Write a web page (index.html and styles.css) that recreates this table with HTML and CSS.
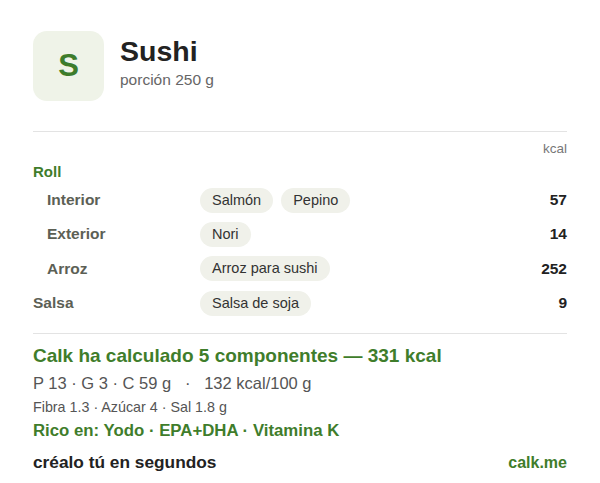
FILE: index.html
```html
<!DOCTYPE html>
<html lang="es">
<head>
    <meta charset="UTF-8">
    <title>Sushi</title>
    <link rel="stylesheet" href="styles.css">
</head>
<body>
    <div class="card">
        <div class="header">
            <div class="avatar">S</div>
            <div class="title-block">
                <h1>Sushi</h1>
                <div class="portion">porción 250 g</div>
            </div>
        </div>
        <hr>
        <div class="unit">kcal</div>
        <div class="group">Roll</div>
        <div class="row sub">
            <div class="label">Interior</div>
            <div class="chips"><span class="chip">Salmón</span><span class="chip">Pepino</span></div>
            <div class="kcal">57</div>
        </div>
        <div class="row sub">
            <div class="label">Exterior</div>
            <div class="chips"><span class="chip">Nori</span></div>
            <div class="kcal">14</div>
        </div>
        <div class="row sub">
            <div class="label">Arroz</div>
            <div class="chips"><span class="chip">Arroz para sushi</span></div>
            <div class="kcal">252</div>
        </div>
        <div class="row">
            <div class="label">Salsa</div>
            <div class="chips"><span class="chip">Salsa de soja</span></div>
            <div class="kcal">9</div>
        </div>
        <hr class="bottom">
        <div class="total">Calk ha calculado 5 componentes — 331 kcal</div>
        <div class="macros">P 13 · G 3 · C 59 g &nbsp; · &nbsp; 132 kcal/100 g</div>
        <div class="extra">Fibra 1.3 · Azúcar 4 · Sal 1.8 g</div>
        <div class="rich">Rico en: Yodo · EPA+DHA · Vitamina K</div>
        <div class="footer">
            <span class="cta">créalo tú en segundos</span>
            <span class="brand">calk.me</span>
        </div>
    </div>
</body>
</html>
```

FILE: styles.css
```css
body {
    margin: 0;
    background: #fff;
    font-family: 'Liberation Sans', Arial, sans-serif;
    color: #222;
}
.card {
    padding: 31px 33px 0 33px;
}
.header {
    display: flex;
    align-items: center;
    gap: 16px;
}
.avatar {
    width: 71px;
    height: 70px;
    border-radius: 14px;
    background: #eff3e8;
    color: #3d7c2b;
    font-size: 31px;
    font-weight: 700;
    display: flex;
    align-items: center;
    justify-content: center;
}
.title-block {
    margin-top: -8px;
}
h1 {
    margin: 0;
    font-size: 28.5px;
    line-height: 32px;
    font-weight: 700;
    color: #222;
}
.portion {
    font-size: 15.5px;
    color: #666;
    margin-top: 4px;
}
hr {
    border: none;
    border-top: 1px solid #e3e3e3;
    margin: 30px 0 0 0;
}
.unit {
    text-align: right;
    font-size: 13.5px;
    color: #777;
    margin-top: 10px;
    line-height: 14px;
}
.group {
    color: #3f7d2b;
    font-size: 15px;
    font-weight: 700;
    margin-top: 8px;
    line-height: 16px;
}
.row {
    display: flex;
    align-items: center;
    height: 34.3px;
    font-size: 15px;
}
.group + .row {
    margin-top: 3px;
}
.label {
    width: 167px;
    font-size: 15.5px;
    font-weight: 700;
    color: #5c6055;
}
.sub .label {
    width: 153px;
    padding-left: 14px;
}
.chips {
    flex: 1;
    display: flex;
    gap: 8px;
}
.chip {
    background: #f0f1ea;
    border-radius: 13px;
    padding: 0 12px;
    height: 25px;
    line-height: 25px;
    font-size: 14.5px;
    color: #333;
}
.kcal {
    font-weight: 700;
    font-size: 15.5px;
    color: #222;
}
hr.bottom {
    margin-top: 13px;
}
.total {
    color: #3f7d2b;
    font-size: 19px;
    font-weight: 700;
    margin-top: 12px;
    line-height: 20px;
}
.macros {
    font-size: 16.5px;
    color: #555;
    margin-top: 8px;
    line-height: 18px;
}
.extra {
    font-size: 14.3px;
    color: #555;
    margin-top: 7px;
    line-height: 16px;
}
.rich {
    color: #3f7d2b;
    font-size: 16.8px;
    font-weight: 700;
    margin-top: 7px;
    line-height: 18px;
}
.footer {
    display: flex;
    justify-content: space-between;
    align-items: baseline;
    margin-top: 12px;
}
.cta {
    font-size: 17.3px;
    font-weight: 700;
    color: #222;
}
.brand {
    font-size: 16px;
    font-weight: 700;
    color: #3f7d2b;
}
```
